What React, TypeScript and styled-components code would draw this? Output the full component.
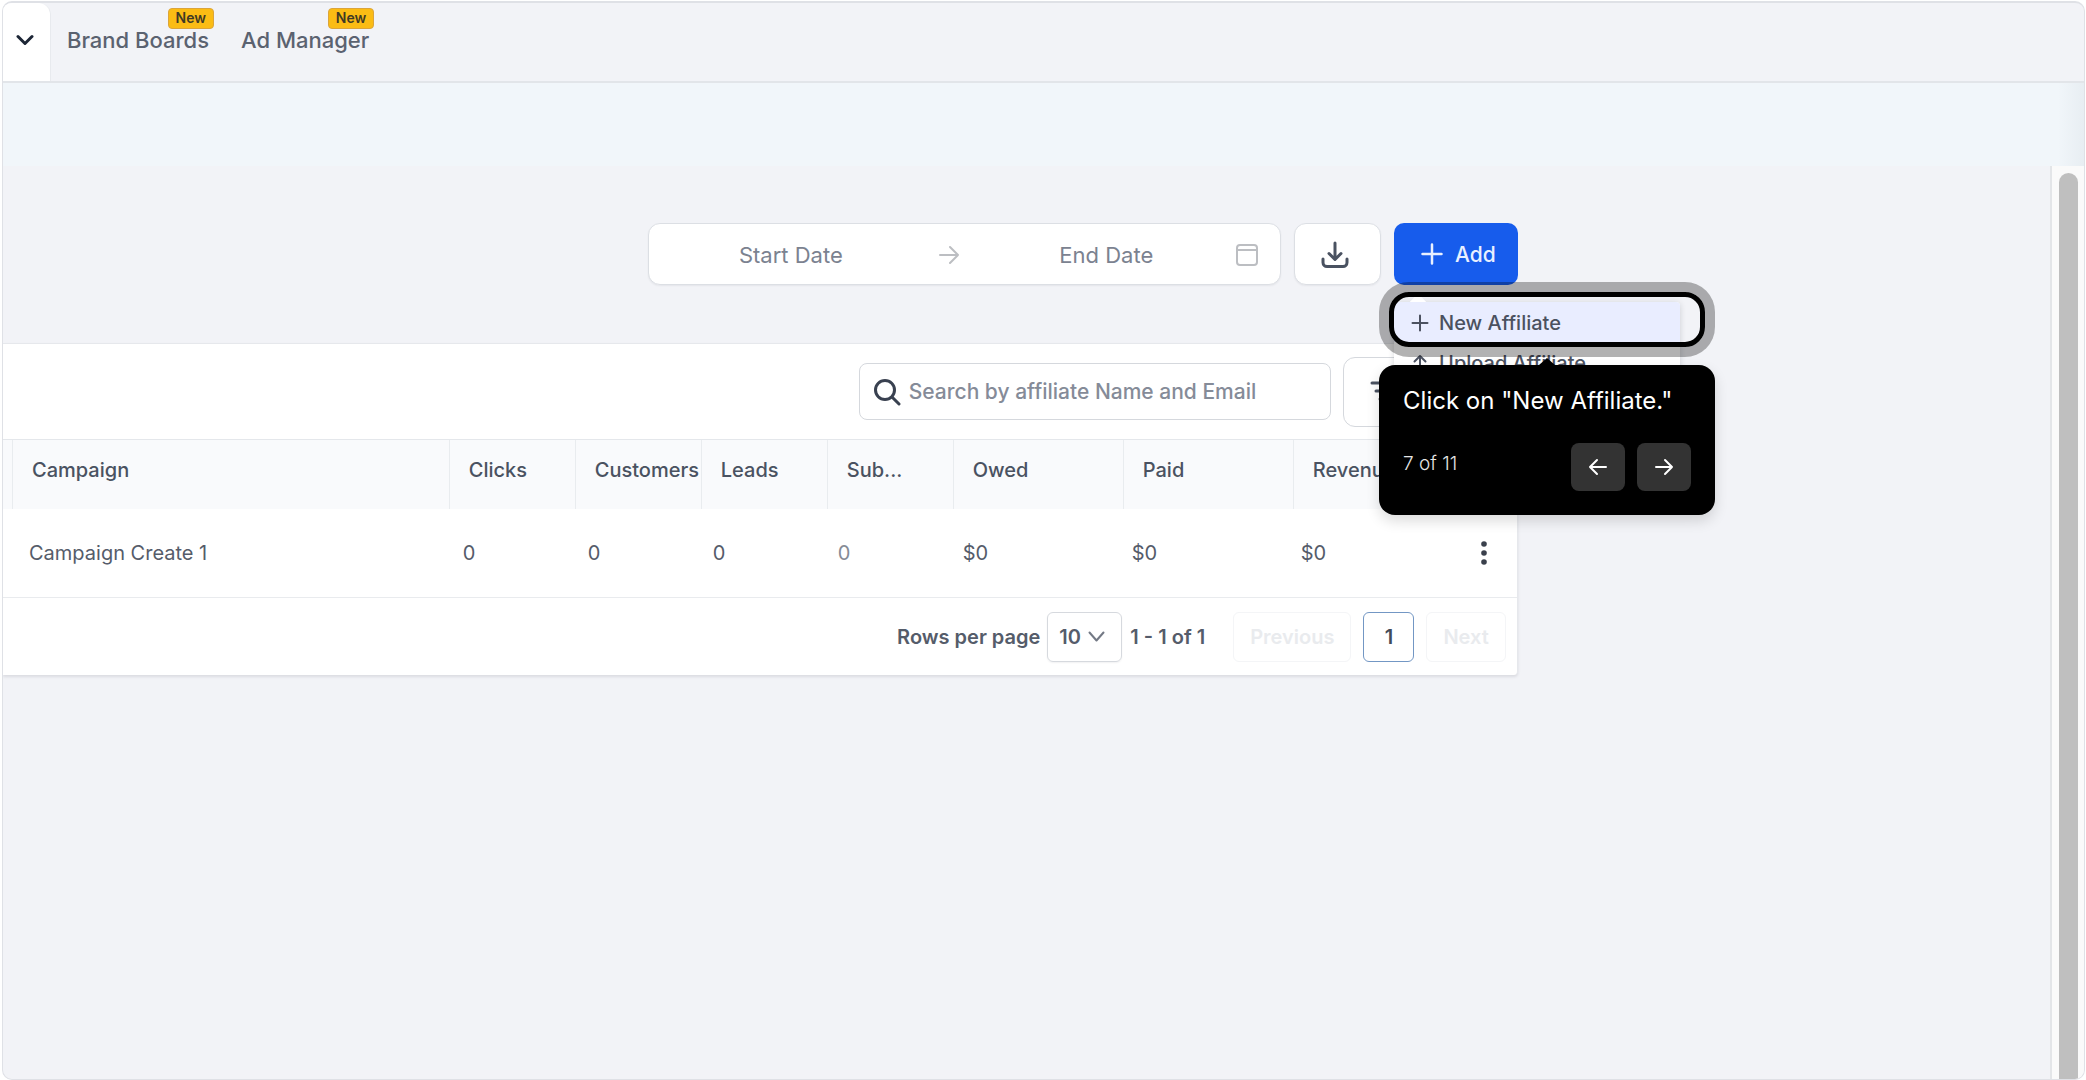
import React from "react";
import styled, { createGlobalStyle, css } from "styled-components";

const GlobalStyle = createGlobalStyle`
  *, *::before, *::after { box-sizing: border-box; }
  body {
    margin: 0;
    background: #ffffff;
    font-family: Inter, "Liberation Sans", sans-serif;
    color: #4a5261;
  }
  button, input, select {
    font: inherit;
    color: inherit;
  }
`;

const Frame = styled.div`
  min-height: calc(100vh - 1px);
  margin: 1px 1px 0 2px;
  border: 1px solid #dfe1e6;
  border-top-width: 2px;
  border-radius: 10px;
  background: #f2f3f7;
  overflow: hidden;
  display: flex;
  flex-direction: column;
`;

const TopBar = styled.header`
  display: flex;
  height: 80px;
  border-bottom: 2px solid #e2e5e9;
`;

const TabToggle = styled.button`
  display: flex;
  align-items: center;
  justify-content: center;
  width: 48px;
  padding: 0 4px 4px 0;
  border: 0;
  border-right: 1px solid #e8eaee;
  border-radius: 0 12px 0 0;
  background: #ffffff;
  color: #1d2636;
`;

const Nav = styled.nav`
  display: flex;
  gap: 32px;
  padding-left: 16px;
`;

const NavLink = styled.a`
  position: relative;
  height: 76px;
  line-height: 74px;
  font-size: 22px;
  font-weight: 500;
  color: #5b6270;
  text-decoration: none;
`;

const NewBadge = styled.span`
  position: absolute;
  top: 5px;
  right: -5px;
  height: 21px;
  padding: 0 7px;
  border: 1px solid #dca53a;
  border-radius: 4px;
  background: #fbbc14;
  color: #3f3a24;
  font-size: 14px;
  line-height: 18px;
  font-weight: 600;
`;

const Band = styled.div`
  height: 83px;
  background:
    linear-gradient(to left, rgba(120, 140, 150, 0.08), transparent 26px),
    #f1f6fa;
`;

const Body = styled.div`
  flex: 1;
  display: flex;
`;

const Main = styled.main`
  flex: 1;
  display: grid;
  grid-template-columns: minmax(0, 37fr) minmax(0, 13fr);
  align-items: start;
  padding-top: 57px;
`;

const Column = styled.div`
  display: flex;
  flex-direction: column;
  gap: 58px;
`;

const ScrollTrack = styled.div`
  display: flex;
  width: 34px;
  padding: 7px 6px 0 7px;
  border-left: 2px solid #e3e5e8;
  background: #fafafa;
`;

const ScrollThumb = styled.div`
  flex: 1;
  border-radius: 10px 10px 0 0;
  background: #bfbfbf;
`;

const Toolbar = styled.div`
  display: flex;
  justify-content: flex-end;
  gap: 13px;
  height: 62px;
`;

const surface = css`
  border: 1px solid #dcdfe4;
  border-radius: 12px;
  background: #ffffff;
  box-shadow: 0 1px 2px rgba(16, 24, 40, 0.06);
`;

const DateRange = styled.div`
  ${surface}
  display: flex;
  align-items: center;
  width: 633px;
  padding: 2px 22px 0 12px;
  color: #bcbec2;
`;

const DateInput = styled.input`
  flex: 1;
  min-width: 0;
  padding: 0;
  border: 0;
  outline: 0;
  background: transparent;
  font-size: 22px;
  line-height: 28px;
  text-align: center;
  &::placeholder {
    color: #7b8290;
    opacity: 1;
  }
`;

const RangeArrow = styled.span`
  display: flex;
  margin: 0 18px;
`;

const DownloadButton = styled.button`
  ${surface}
  display: flex;
  align-items: center;
  justify-content: center;
  width: 87px;
  padding: 2px 6px 0 0;
`;

const AddMenu = styled.div`
  position: relative;
  display: flex;
`;

const AddButton = styled.button`
  display: flex;
  align-items: center;
  gap: 12px;
  padding: 0 22px 0 27px;
  border: 0;
  border-radius: 10px;
  background: #175cec;
  color: #e9f0ff;
  font-size: 21px;
  font-weight: 500;
`;

const MenuPanel = styled.div`
  position: absolute;
  z-index: 1;
  top: 79px;
  left: 0;
  width: 286px;
  border-radius: 4px;
  background: #ffffff;
  box-shadow: 0 1px 6px rgba(16, 24, 40, 0.16);
  &::before {
    content: "";
    position: absolute;
    z-index: -1;
    top: -5px;
    left: 16px;
    width: 16px;
    height: 16px;
    border-radius: 3px;
    background: #ffffff;
    transform: rotate(45deg);
  }
`;

const MenuItem = styled.button<{ $active?: boolean }>`
  display: flex;
  align-items: center;
  gap: 10px;
  width: 100%;
  height: 40px;
  padding: 2px 17px 0;
  border: 0;
  border-radius: 4px 4px 0 0;
  background: ${(p) => (p.$active ? "#e9edff" : "#ffffff")};
  font-size: 20px;
  font-weight: 500;
  color: #4b5160;
`;

const Spotlight = styled.div`
  position: absolute;
  z-index: 2;
  top: 69px;
  left: -5px;
  width: 316px;
  height: 55px;
  border: 5px solid #000000;
  border-radius: 20px;
  box-shadow: 0 0 0 10px rgba(0, 0, 0, 0.3);
  pointer-events: none;
`;

const Tour = styled.section`
  position: absolute;
  z-index: 3;
  top: 142px;
  left: -15px;
  width: 336px;
  padding: 20px 24px 24px;
  border-radius: 16px;
  background: #000000;
  color: #ffffff;
  box-shadow: 0 6px 14px rgba(0, 0, 0, 0.14);
  &::before {
    content: "";
    position: absolute;
    bottom: 100%;
    left: 160px;
    border: 8px solid transparent;
    border-top-width: 0;
    border-bottom: 7px solid #000000;
  }
`;

const TourText = styled.p`
  margin: 0 0 26px;
  font-size: 24px;
  line-height: 32px;
  white-space: nowrap;
`;

const TourFooter = styled.div`
  display: flex;
  align-items: flex-start;
  gap: 12px;
`;

const TourCount = styled.span`
  flex: 1;
  font-size: 19px;
  font-weight: 300;
  line-height: 42px;
  color: #e6e6e6;
`;

const TourButton = styled.button`
  display: flex;
  align-items: center;
  justify-content: center;
  width: 54px;
  height: 48px;
  padding: 0;
  border: 0;
  border-radius: 8px;
  background: #333333;
  color: #ffffff;
`;

const Card = styled.section`
  border-top: 1px solid #e6e8ec;
  border-right: 1px solid #e6e8ec;
  border-radius: 0 0 4px 0;
  background: #ffffff;
  box-shadow: 0 2px 3px rgba(16, 24, 40, 0.1);
`;

const SearchRow = styled.div`
  display: flex;
  align-items: center;
  justify-content: flex-end;
  gap: 12px;
  height: 95px;
  padding-right: 17px;
`;

const SearchBox = styled.label`
  display: flex;
  align-items: center;
  gap: 8px;
  width: 472px;
  height: 57px;
  padding: 0 13px;
  border: 1px solid #d5d8dd;
  border-radius: 8px;
  color: #394150;
`;

const SearchInput = styled.input`
  flex: 1;
  min-width: 0;
  padding: 0;
  border: 0;
  outline: 0;
  background: transparent;
  font-size: 21px;
  font-weight: 500;
  line-height: 28px;
  &::placeholder {
    color: #858b98;
    opacity: 1;
  }
`;

const FilterButton = styled.button`
  display: flex;
  align-items: center;
  width: 157px;
  height: 70px;
  padding: 0 26px 2px;
  border: 1px solid #d5d8dd;
  border-radius: 12px;
  background: #ffffff;
`;

const Table = styled.table`
  display: block;
  font-size: 20px;
  line-height: 28px;
`;

const TableHead = styled.thead`
  display: block;
  border-top: 1px solid #e4e7eb;
  background: #f9fafc;
`;

const TableBody = styled.tbody`
  display: block;
`;

const HeadRow = styled.tr`
  display: grid;
  grid-template-columns: 9px minmax(0, 1fr) repeat(4, 126px) repeat(2, 170px) 224px;
  height: 69px;
`;

const BodyRow = styled.tr`
  display: grid;
  grid-template-columns: 10px minmax(0, 1fr) repeat(4, 125px) repeat(2, 169px) 120px 112px;
  height: 89px;
  border-bottom: 1px solid #e9ebee;
`;

const HeadCell = styled.th`
  padding: 16px 0 0 19px;
  border-left: 1px solid #e9ecef;
  text-align: left;
  font-weight: 500;
  color: #4a5261;
  white-space: nowrap;
  overflow: hidden;
`;

const HeadStub = styled.td`
  padding: 0;
`;

const BodyCell = styled.td<{ $muted?: boolean }>`
  display: flex;
  align-items: center;
  padding: 0 16px;
  color: ${(p) => (p.$muted ? "#858b96" : "#555c6a")};
`;

const ActionCell = styled(BodyCell)`
  justify-content: flex-end;
  padding: 0 20px;
`;

const KebabButton = styled.button`
  display: flex;
  justify-content: center;
  width: 26px;
  padding: 0;
  border: 0;
  background: transparent;
  color: #3a404c;
`;

const Footer = styled.footer`
  display: flex;
  align-items: center;
  justify-content: flex-end;
  height: 77px;
  padding-right: 11px;
  font-size: 20px;
  font-weight: 600;
  color: #555c6a;
`;

const PageSize = styled.label`
  display: flex;
  align-items: center;
  gap: 7px;
`;

const SelectWrap = styled.span`
  display: grid;
  align-items: center;
  justify-items: end;
  width: 75px;
  height: 50px;
  padding-right: 16px;
  border: 1px solid #d6d9de;
  border-radius: 6px;
  box-shadow: 0 1px 2px rgba(16, 24, 40, 0.06);
  & > * {
    grid-area: 1 / 1;
  }
  & > svg {
    color: #737985;
  }
`;

const Select = styled.select`
  justify-self: stretch;
  height: 48px;
  padding: 0 0 0 11px;
  border: 0;
  outline: 0;
  background: transparent;
  appearance: none;
`;

const RangeText = styled.span`
  margin: 0 28px 0 8px;
`;

const Pager = styled.div`
  display: flex;
  gap: 12px;
`;

const PageButton = styled.button<{ $current?: boolean }>`
  height: 50px;
  padding: 0 16px;
  min-width: 51px;
  border: 1px solid ${(p) => (p.$current ? "#7397c4" : "#f4f5f7")};
  border-radius: 6px;
  background: #ffffff;
  color: ${(p) => (p.$current ? "#444b59" : "#e9ebee")};
`;

type IconProps = { w: number; h: number; stroke?: number; children: React.ReactNode };

const Icon = ({ w, h, stroke = 2, children }: IconProps) => (
  <svg
    width={w}
    height={h}
    viewBox={`0 0 ${w} ${h}`}
    fill="none"
    stroke="currentColor"
    strokeWidth={stroke}
    strokeLinecap="round"
    strokeLinejoin="round"
    aria-hidden="true"
  >
    {children}
  </svg>
);

const numericHeads = ["Clicks", "Customers", "Leads", "Sub...", "Owed", "Paid", "Revenue"];
const row = {
  campaign: "Campaign Create 1",
  values: ["0", "0", "0", "0", "$0", "$0", "$0"],
};

export default function App() {
  return (
    <>
      <GlobalStyle />
      <Frame>
        <TopBar>
          <TabToggle aria-label="More tabs">
            <Icon w={18} h={12} stroke={3}>
              <path d="M2 2.5 9 9.5l7-7" />
            </Icon>
          </TabToggle>
          <Nav>
            <NavLink href="#brand-boards">
              Brand Boards<NewBadge>New</NewBadge>
            </NavLink>
            <NavLink href="#ad-manager">
              Ad Manager<NewBadge>New</NewBadge>
            </NavLink>
          </Nav>
        </TopBar>
        <Band />
        <Body>
          <Main>
            <Column>
              <Toolbar>
                <DateRange>
                  <DateInput aria-label="Start date" placeholder="Start Date" />
                  <RangeArrow>
                    <Icon w={20} h={20}>
                      <path d="M1 10h18M11 2l8 8-8 8" />
                    </Icon>
                  </RangeArrow>
                  <DateInput aria-label="End date" placeholder="End Date" />
                  <Icon w={22} h={22}>
                    <rect x="1" y="1" width="20" height="20" rx="3" />
                    <path d="M1 6h20" />
                  </Icon>
                </DateRange>
                <DownloadButton aria-label="Download">
                  <Icon w={28} h={28} stroke={3}>
                    <path d="M14 2v16M8 12.500l6 6 6-6M2 18v3.500a4 4 0 0 0 4 4h16a4 4 0 0 0 4-4V18" />
                  </Icon>
                </DownloadButton>
                <AddMenu>
                  <AddButton>
                    <Icon w={22} h={22} stroke={2.5}>
                      <path d="M11 1.500v19M1.500 11h19" />
                    </Icon>
                    Add
                  </AddButton>
                  <MenuPanel>
                    <MenuItem $active>
                      <Icon w={18} h={18}>
                        <path d="M9 1.500v15M1.500 9h15" />
                      </Icon>
                      New Affiliate
                    </MenuItem>
                    <MenuItem>
                      <Icon w={18} h={18}>
                        <path d="M9 17V2M3.500 7.500 9 2l5.500 5.500" />
                      </Icon>
                      Upload Affiliate
                    </MenuItem>
                  </MenuPanel>
                  <Spotlight />
                  <Tour>
                    <TourText>Click on "New Affiliate."</TourText>
                    <TourFooter>
                      <TourCount>7 of 11</TourCount>
                      <TourButton aria-label="Previous step">
                        <Icon w={20} h={18}>
                          <path d="M18 9H2M9 2 2 9l7 7" />
                        </Icon>
                      </TourButton>
                      <TourButton aria-label="Next step">
                        <Icon w={20} h={18}>
                          <path d="M2 9h16M11 2l7 7-7 7" />
                        </Icon>
                      </TourButton>
                    </TourFooter>
                  </Tour>
                </AddMenu>
              </Toolbar>
              <Card>
                <SearchRow>
                  <SearchBox>
                    <Icon w={28} h={28} stroke={3}>
                      <circle cx="12" cy="12" r="9.500" />
                      <path d="m19 19 7 7" />
                    </Icon>
                    <SearchInput
                      aria-label="Search affiliates"
                      placeholder="Search by affiliate Name and Email"
                    />
                  </SearchBox>
                  <FilterButton aria-label="Filters">
                    <Icon w={26} h={22} stroke={3}>
                      <path d="M2 3h22M6 11h14M10 19h6" />
                    </Icon>
                  </FilterButton>
                </SearchRow>
                <Table>
                  <TableHead>
                    <HeadRow>
                      <HeadStub />
                      <HeadCell scope="col">Campaign</HeadCell>
                      {numericHeads.map((name) => (
                        <HeadCell scope="col" key={name}>
                          {name}
                        </HeadCell>
                      ))}
                    </HeadRow>
                  </TableHead>
                  <TableBody>
                    <BodyRow>
                      <HeadStub />
                      <BodyCell>{row.campaign}</BodyCell>
                      {row.values.map((value, i) => (
                        <BodyCell key={numericHeads[i]} $muted={i === 3}>
                          {value}
                        </BodyCell>
                      ))}
                      <ActionCell>
                        <KebabButton aria-label="Row actions">
                          <svg width="6" height="26" viewBox="0 0 6 26" fill="currentColor" aria-hidden="true">
                            <circle cx="3" cy="4" r="2.800" />
                            <circle cx="3" cy="13" r="2.800" />
                            <circle cx="3" cy="22" r="2.800" />
                          </svg>
                        </KebabButton>
                      </ActionCell>
                    </BodyRow>
                  </TableBody>
                </Table>
                <Footer>
                  <PageSize>
                    Rows per page
                    <SelectWrap>
                      <Select defaultValue="10">
                        <option>10</option>
                      </Select>
                      <Icon w={17} h={11}>
                        <path d="M1.500 1.500l7 8 7-8" />
                      </Icon>
                    </SelectWrap>
                  </PageSize>
                  <RangeText>1 - 1 of 1</RangeText>
                  <Pager>
                    <PageButton disabled>Previous</PageButton>
                    <PageButton $current>1</PageButton>
                    <PageButton disabled>Next</PageButton>
                  </Pager>
                </Footer>
              </Card>
            </Column>
          </Main>
          <ScrollTrack>
            <ScrollThumb />
          </ScrollTrack>
        </Body>
      </Frame>
    </>
  );
}
